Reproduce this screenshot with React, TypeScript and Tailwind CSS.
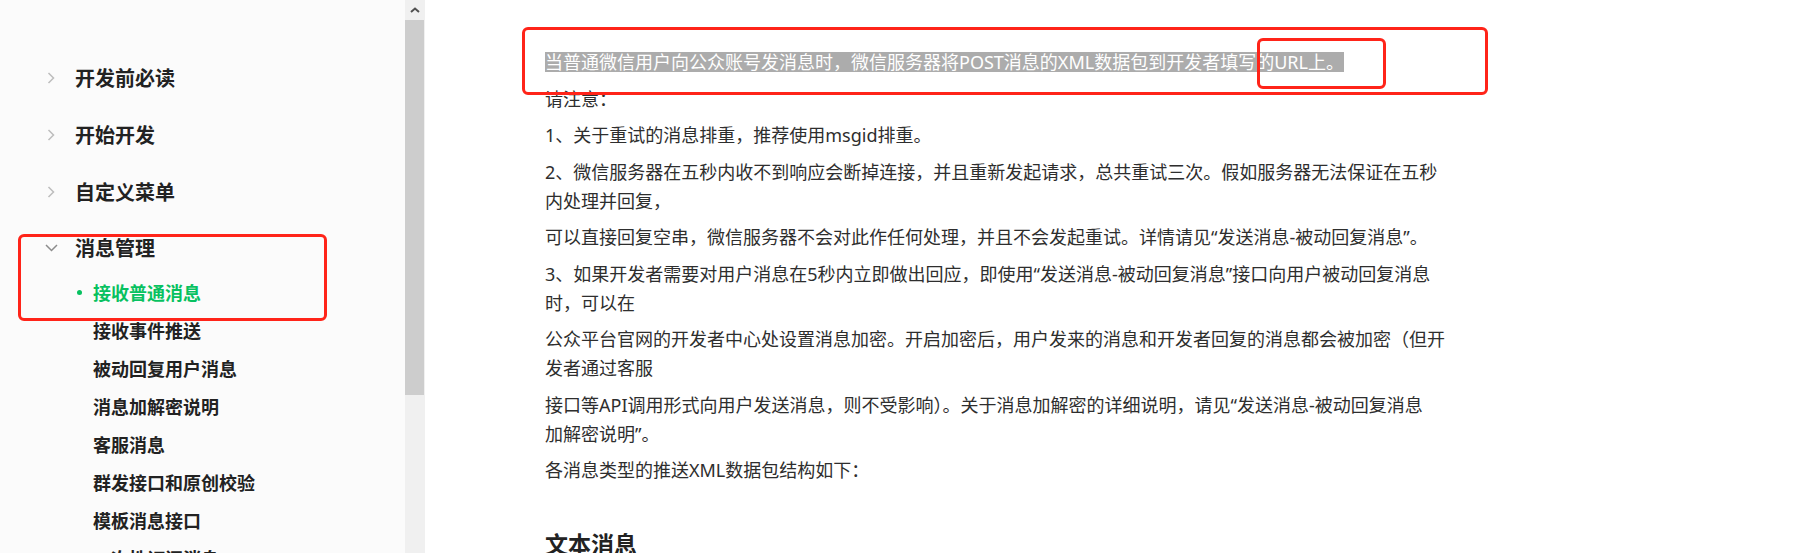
const topMenu = [
  { id: 1, title: "开发前必读", open: false },
  { id: 2, title: "开始开发", open: false },
  { id: 3, title: "自定义菜单", open: false },
];

const subMenu = [
  { id: 1, title: "接收普通消息", active: true },
  { id: 2, title: "接收事件推送", active: false },
  { id: 3, title: "被动回复用户消息", active: false },
  { id: 4, title: "消息加解密说明", active: false },
  { id: 5, title: "客服消息", active: false },
  { id: 6, title: "群发接口和原创校验", active: false },
  { id: 7, title: "模板消息接口", active: false },
  { id: 8, title: "一次性订阅消息", active: false },
];

// each entry is one paragraph, each string one visual line
const paragraphs: string[][] = [
  ["请注意："],
  ["1、关于重试的消息排重，推荐使用msgid排重。"],
  [
    "2、微信服务器在五秒内收不到响应会断掉连接，并且重新发起请求，总共重试三次。假如服务器无法保证在五秒",
    "内处理并回复，",
  ],
  ["可以直接回复空串，微信服务器不会对此作任何处理，并且不会发起重试。详情请见“发送消息-被动回复消息”。"],
  [
    "3、如果开发者需要对用户消息在5秒内立即做出回应，即使用“发送消息-被动回复消息”接口向用户被动回复消息",
    "时，可以在",
  ],
  [
    "公众平台官网的开发者中心处设置消息加密。开启加密后，用户发来的消息和开发者回复的消息都会被加密（但开",
    "发者通过客服",
  ],
  [
    "接口等API调用形式向用户发送消息，则不受影响）。关于消息加解密的详细说明，请见“发送消息-被动回复消息",
    "加解密说明”。",
  ],
  ["各消息类型的推送XML数据包结构如下："],
];

const ChevronRight = () => (
  <svg width="8" height="12" viewBox="0 0 8 12" fill="none">
    <polyline points="1.5,1 6.5,6 1.5,11" stroke="#bdbdbd" strokeWidth="1.5" />
  </svg>
);

const ChevronDown = () => (
  <svg width="13" height="8" viewBox="0 0 13 8" fill="none">
    <polyline points="1,1 6.5,6.5 12,1" stroke="#8c8c8c" strokeWidth="1.5" />
  </svg>
);

const App = () => {
  return (
    <div className="relative flex w-full h-[553px] overflow-hidden bg-white font-['Noto_Sans_CJK_SC','Noto_Sans',sans-serif]">
      {/* sidebar */}
      <div className="w-[405px] h-full bg-[#fbfbfb] pt-[49px] text-[#222222]">
        {topMenu.map((el) => (
          <div key={el.id} className="flex items-center h-[57px] pl-[43px]">
            <div className="w-[16px] flex justify-center">
              <ChevronRight />
            </div>
            <div className="ml-[16px] text-[20px] font-bold">{el.title}</div>
          </div>
        ))}
        <div className="flex items-center h-[53px] pt-[3px] pl-[43px]">
          <div className="w-[16px] flex justify-center">
            <ChevronDown />
          </div>
          <div className="ml-[16px] text-[20px] font-bold">消息管理</div>
        </div>
        <div className="flex flex-col">
          {subMenu.map((el) => (
            <div key={el.id} className="flex items-center h-[38px] pl-[77px]">
              <div
                className={`w-[5px] h-[5px] rounded-full ${
                  el.active ? "bg-[#07c160]" : "bg-transparent"
                }`}
              />
              <div
                className={`ml-[11px] text-[18px] font-bold whitespace-nowrap ${
                  el.active ? "text-[#07c160]" : "text-[#222222]"
                }`}
              >
                {el.title}
              </div>
            </div>
          ))}
        </div>
      </div>

      {/* scrollbar */}
      <div className="w-[20px] h-full bg-[#f0f0f0] flex flex-col">
        <div className="h-[20px] flex items-center justify-center">
          <svg width="10" height="6" viewBox="0 0 10 6" fill="none">
            <polyline points="1,5 5,1.5 9,5" stroke="#505050" strokeWidth="2" />
          </svg>
        </div>
        <div className="w-[19px] h-[375px] bg-[#cdcdcd]" />
      </div>

      {/* content */}
      <div className="flex-1 h-full pl-[120px] pt-[48px] text-[18px] leading-[29px] text-[#2e2e2e] font-['Noto_Sans','Noto_Sans_CJK_SC',sans-serif]">
        <p className="mb-[7.5px] whitespace-nowrap">
          <span className="inline-block leading-[20px] bg-[#acacac] text-white">
            当普通微信用户向公众账号发消息时，微信服务器将POST消息的XML数据包到开发者填写的URL上。
          </span>
        </p>
        {paragraphs.map((lines, i) => (
          <p key={i} className="mb-[7.5px] whitespace-nowrap">
            {lines.map((line, j) => (
              <span key={j} className="block">
                {line}
              </span>
            ))}
          </p>
        ))}
        <h2 className="mt-[42px] text-[23px] leading-[32px] font-bold text-[#222222] font-['Noto_Sans_CJK_SC',sans-serif]">
          文本消息
        </h2>
      </div>

      {/* red annotation boxes */}
      <div className="absolute left-[522px] top-[27px] w-[966px] h-[68px] border-[3px] border-[#ff2419] rounded-[6px]" />
      <div className="absolute left-[1257px] top-[38px] w-[129px] h-[51px] border-[3px] border-[#ff2419] rounded-[6px]" />
      <div className="absolute left-[18px] top-[234px] w-[309px] h-[87px] border-[3px] border-[#ff2419] rounded-[6px]" />
    </div>
  );
};

export default App;
